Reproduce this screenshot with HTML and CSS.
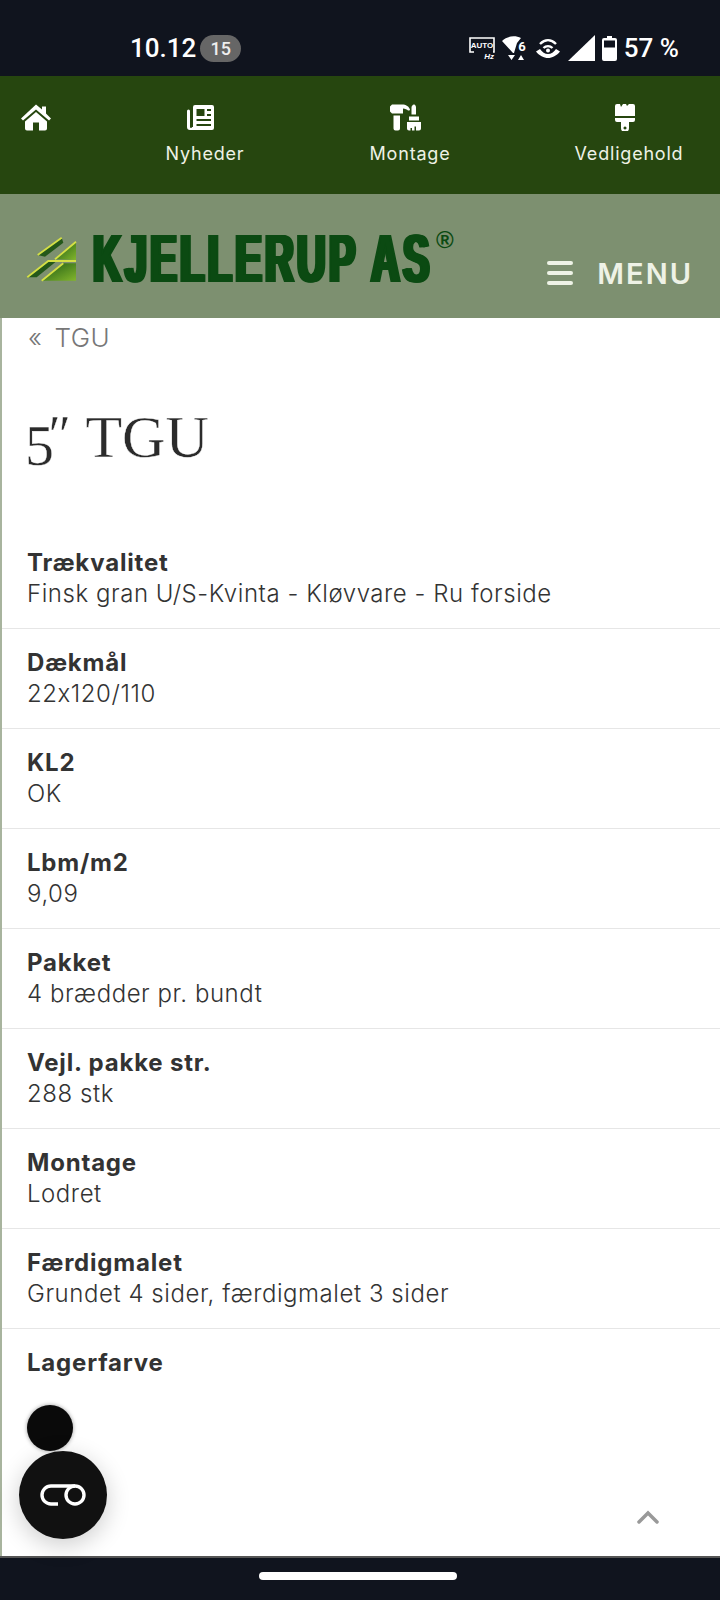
FILE: index.html
```html
<!DOCTYPE html>
<html lang="da">
<head>
  <meta charset="UTF-8" />
  <meta name="viewport" content="width=device-width, initial-scale=1.0" />
  <title>5" TGU</title>
  <link rel="stylesheet" href="styles.css">
</head>
<body>
  <div class="page">
    <!-- Phone status bar -->
    <div class="statusbar">
      <span class="time">10.12</span>
      <span class="badge">15</span>
      <div class="status-right">
        <svg class="st-auto" width="26" height="24" viewBox="0 0 26 24">
          <path d="M5 16H1V2h24v14h-1" fill="none" stroke="#fff" stroke-width="1.600"/>
          <text x="13" y="12" class="st-auto-text" text-anchor="middle">AUTO</text>
          <text x="25" y="23" class="st-hz-text" text-anchor="end">Hz</text>
        </svg>
        <svg class="st-wifi" width="26" height="26" viewBox="0 0 26 26">
          <path d="M0 6C5 1 13 0 19 3L15 8 12 18h-1z" fill="#fff"/>
          <path d="M6 20h7l-3.500 5zM16 25h6l-3-5z" fill="#fff"/>
          <text x="20" y="16" class="st-six" text-anchor="middle">6</text>
        </svg>
        <svg class="st-hotspot" width="26" height="24" viewBox="0 0 26 24">
          <path d="M5 8C10 3 16 3 21 8M8.500 12C11 9.500 15 9.500 17.500 12" fill="none" stroke="#fff" stroke-width="2.400"/>
          <circle cx="13" cy="14.500" r="2" fill="#fff"/>
          <path d="M1 15.500l4-2.500c2 3 5 5 8 5s6-2 8-5l4 2.500c-3 4-8 6.500-12 6.500S4 19.500 1 15.500z" fill="#fff"/>
        </svg>
        <svg class="st-signal" width="27" height="27" viewBox="0 0 27 27"><path d="M0 26L27 0v26z" fill="#fff"/></svg>
        <svg class="st-batt" width="15" height="25" viewBox="0 0 15 25">
          <path d="M5 0h5v2h3a2 2 0 0 1 2 2v19a2 2 0 0 1-2 2H2a2 2 0 0 1-2-2V4a2 2 0 0 1 2-2h3z" fill="#fff"/>
          <rect x="2" y="4.500" width="11" height="7" fill="#10141e"/>
        </svg>
        <span class="pct">57 %</span>
      </div>
    </div>

    <!-- Top links -->
    <nav class="topnav">
      <a class="nav-item nav-home">
        <svg width="30" height="26" viewBox="0 0 30 26"><path d="M15 0l6 5V2h4v7l5 5-2 2-13-11L2 16l-2-2zM4 17L15 7.500 26 17v7a2 2 0 0 1-2 2h-6v-8h-6v8H6a2 2 0 0 1-2-2z" fill="#fff"/></svg>
      </a>
      <a class="nav-item nav-news">
        <svg width="27" height="25" viewBox="0 0 27 25"><path d="M6 2a2 2 0 0 1 2-2h17a2 2 0 0 1 2 2v21a2 2 0 0 1-2 2H3a3 3 0 0 1-3-3V6a1.500 1.500 0 0 1 3 0v16a1 1 0 0 0 2 0h1zM9.500 4v7h8V4zM20 4v2h4V4zM20 9v2h4V9zM9.500 14v2H24v-2zM9.500 19v2H24v-2z" fill="#fff" fill-rule="evenodd"/></svg>
        <span>Nyheder</span>
      </a>
      <a class="nav-item nav-mont">
        <svg width="33" height="26" viewBox="0 0 33 26"><path d="M3 0h10c4 0 7 2 8 5 0 1-1 1-2 1-1-1-3-2-5-2v5H3L1 7V2zM4.500 11H11v13a2 2 0 0 1-2 2H6.500a2 2 0 0 1-2-2zM22.500 10V3c0-1 1-3 2.500-3s2 2 2 3v7zM20 12h10v4H20zM18 17.500h14V24a2 2 0 0 1-2 2h-3v-4h-1.500v4H23v-2.500h-1.500V26H20a2 2 0 0 1-2-2z" fill="#fff"/></svg>
        <span>Montage</span>
      </a>
      <a class="nav-item nav-vedl">
        <svg class="brush" width="20" height="27" viewBox="0 0 20 27"><path d="M2 0h3l1 3 2-3h3l1 2 2-2h4a2 2 0 0 1 2 2v10H0V2a2 2 0 0 1 2-2zM0 14h20v2a2 2 0 0 1-2 2h-4v6a4 4 0 0 1-8 0v-6H2a2 2 0 0 1-2-2zM10 22.500a1.500 1.500 0 1 0 .010 0z" fill="#fff" fill-rule="evenodd"/></svg>
        <span>Vedligehold</span>
      </a>
    </nav>

    <!-- Logo and menu -->
    <header class="brandbar">
      <svg class="logo-mark" width="52" height="58" viewBox="0 0 52 58">
        <defs>
          <linearGradient id="roof" x1="0" y1="0" x2="1" y2="1">
            <stop offset="0" stop-color="#1d5a14"/>
            <stop offset="1" stop-color="#82b52c"/>
          </linearGradient>
        </defs>
        <path d="M11.700 27L35.700 9.700l1.600 5L19 28.700z" fill="#24581a"/>
        <path d="M29 31.300L50 13.700V32z" fill="url(#roof)"/>
        <path d="M1.300 49.300L22.300 33h8.400L10.700 49.300z" fill="#24581a"/>
        <path d="M15.700 52.700L37.300 35.300H50v17.400z" fill="url(#roof)"/>
        <path d="M11.700 27L35.700 9.700M29 31.300L50 13.700M1.300 49.300L22.300 33H50M15.700 52.700L37.300 35.300" fill="none" stroke="#d5e045" stroke-width="1.800"/>
      </svg>
      <div class="logo-word"><span>KJELLERUP AS</span></div>
      <span class="logo-reg">®</span>
      <button class="menu-btn">
        <span class="burger"><i></i><i></i><i></i></span>
        <span class="menu-text">MENU</span>
      </button>
    </header>

    <main class="content">
      <div class="crumb"><span class="crumb-arrow">«</span><a>TGU</a></div>
      <h1><span class="five">5</span><span class="inch">″</span> TGU</h1>

      <div class="spec-list">
        <div class="spec"><strong>Trækvalitet</strong><span>Finsk gran U/S-Kvinta - Kløvvare - Ru forside</span></div>
        <div class="spec"><strong>Dækmål</strong><span>22x120/110</span></div>
        <div class="spec"><strong>KL2</strong><span>OK</span></div>
        <div class="spec"><strong>Lbm/m2</strong><span>9,09</span></div>
        <div class="spec"><strong>Pakket</strong><span>4 brædder pr. bundt</span></div>
        <div class="spec"><strong>Vejl. pakke str.</strong><span>288 stk</span></div>
        <div class="spec"><strong>Montage</strong><span>Lodret</span></div>
        <div class="spec"><strong>Færdigmalet</strong><span>Grundet 4 sider, færdigmalet 3 sider</span></div>
        <div class="spec last"><strong>Lagerfarve</strong></div>
      </div>

      <!-- Floating buttons -->
      <div class="fab-small"></div>
      <div class="fab">
        <svg width="46" height="22" viewBox="0 0 46 22"><path d="M18 20H11a9 9 0 0 1 0-18h24" fill="none" stroke="#fff" stroke-width="3.400"/><circle cx="35" cy="11" r="9" fill="none" stroke="#fff" stroke-width="3.400"/></svg>
      </div>
      <svg class="to-top" width="22" height="14" viewBox="0 0 22 14"><path d="M2 12l9-9 9 9" fill="none" stroke="#999" stroke-width="3.500" stroke-linecap="round"/></svg>
    </main>

    <div class="navbar"><div class="handle"></div></div>
  </div>
</body>
</html>
```

FILE: styles.css
```css
* {
  box-sizing: border-box;
}

body {
  margin: 0;
  background: #fff;
  font-family: Inter, "Open Sans", sans-serif;
  font-feature-settings: "calt" 0;
  color: #333;
}

.page {
  width: 720px;
  height: 1600px;
  display: flex;
  flex-direction: column;
  overflow: hidden;
}

/* status bar */
.statusbar {
  height: 76px;
  flex: none;
  background: #10141e;
  color: #fff;
  display: flex;
  align-items: center;
  padding: 20px 41px 0 130px;
  font-family: Roboto, sans-serif;
}

.time {
  font-size: 26px;
  font-weight: 500;
  line-height: 30px;
}

.badge {
  width: 41px;
  height: 27px;
  margin-left: 4px;
  border-radius: 14px;
  background: #666;
  font-size: 18px;
  font-weight: 500;
  line-height: 27px;
  text-align: center;
  color: #eee;
}

.status-right {
  margin-left: auto;
  display: flex;
  align-items: center;
  gap: 7px;
}

.st-auto-text {
  font: 700 8px "Liberation Sans", sans-serif;
  fill: #fff;
}

.st-hz-text {
  font: italic 700 8px "Liberation Sans", sans-serif;
  fill: #fff;
}

.st-six {
  font: 700 13px Roboto, sans-serif;
  fill: #fff;
}

.pct {
  font-size: 26px;
  font-weight: 500;
  line-height: 30px;
}

/* green links */
.topnav {
  height: 118px;
  flex: none;
  background: #26460f;
  display: flex;
  align-items: flex-start;
  gap: 105px;
  padding: 28px 0 0 21px;
}

.nav-item {
  display: flex;
  flex-direction: column;
  align-items: center;
  gap: 11px;
  color: #eef2e6;
  font-size: 18px;
  line-height: 24px;
  letter-spacing: 0.8px;
}

.nav-item svg {
  height: 27px;
}

.nav-home { width: 30px; }
.nav-news { width: 98px; }
.nav-mont { width: 102px; }
.nav-vedl { width: 130px; margin-left: -2px; }

.nav-news svg { margin-right: 10px; }
.nav-mont svg { margin-right: 10px; }
.nav-vedl svg { margin-right: 8px; }

/* logo bar */
.brandbar {
  height: 124px;
  flex: none;
  background: #7d9070;
  display: flex;
  align-items: flex-start;
  padding: 34px 0 0 26px;
}

.logo-word {
  width: 337px;
  margin: -4px 0 0 15px;
  height: 68px;
}

.logo-word span {
  display: inline-block;
  white-space: nowrap;
  font: 700 68px/68px "Liberation Sans", sans-serif;
  letter-spacing: 6px;
  color: #0b4a12;
  text-shadow: 4px 0 0 #0b4a12, -4px 0 0 #0b4a12, 2px 0 0 #0b4a12, -2px 0 0 #0b4a12;
  transform: scaleX(0.58);
  transform-origin: 0 0;
}

.logo-reg {
  margin: 0 0 0 6px;
  font: 700 24px/24px "Liberation Sans", sans-serif;
  color: #0b4a12;
}

.menu-btn {
  margin: 30px 27px 0 auto;
  padding: 0;
  height: 30px;
  border: 0;
  background: none;
  display: flex;
  align-items: center;
  gap: 24px;
  color: #eef2e6;
  font-family: Inter, sans-serif;
}

.burger {
  width: 26px;
  display: flex;
  flex-direction: column;
  gap: 6px;
}

.burger i {
  display: block;
  height: 4px;
  border-radius: 2px;
  background: #eef2e6;
}

.menu-text {
  font-size: 29px;
  font-weight: 600;
  letter-spacing: 2px;
}

/* page content */
.content {
  flex: 1;
  position: relative;
  padding-left: 1px;
  border-left: 2px solid #a8b49e;
}

.crumb {
  display: flex;
  gap: 12px;
  padding: 4px 0 0 25px;
  font-size: 26px;
  font-weight: 300;
  line-height: 32px;
  letter-spacing: 0.5px;
  color: #777;
}

h1 {
  margin: 47px 0 0 22px;
  height: 87px;
  font-family: "Liberation Serif", serif;
  font-size: 60px;
  font-weight: 400;
  line-height: 68px;
  color: #2b2b2b;
  -webkit-text-stroke: 0.4px #fff;
}

.five {
  font-size: 58px;
  letter-spacing: -9px;
  vertical-align: -8px;
}

.inch {
  font-style: italic;
  font-size: 54px;
  letter-spacing: 4px;
  vertical-align: 4px;
}

.spec-list {
  margin: 41px 0 0 -1px;
}

.spec {
  height: 100px;
  padding: 18px 25px 0 25px;
  border-bottom: 1px solid #e6e6e6;
  display: flex;
  flex-direction: column;
  font-size: 24px;
  line-height: 32px;
  font-weight: 300;
  letter-spacing: 0.55px;
  color: #333;
}

.spec span {
  margin-top: -1px;
}

.spec strong {
  font-weight: 700;
  letter-spacing: 0.8px;
}

.spec.last {
  border-bottom: 0;
}

.fab-small {
  position: absolute;
  left: 25px;
  top: 1087px;
  width: 46px;
  height: 46px;
  border-radius: 50%;
  background: #0a0a0a;
  box-shadow: 0 0 4px rgba(0,0,0,0.4);
}

.fab {
  position: absolute;
  left: 17px;
  top: 1133px;
  width: 88px;
  height: 88px;
  border-radius: 50%;
  background: #111;
  box-shadow: 0 6px 24px rgba(0,0,0,0.2);
  display: flex;
  align-items: center;
  justify-content: center;
}

.to-top {
  position: absolute;
  left: 635px;
  top: 1192px;
}

/* android nav bar */
.navbar {
  height: 44px;
  flex: none;
  background: #10141e;
  border-top: 2px solid #555;
  display: flex;
  justify-content: center;
  padding: 14px 4px 0 0;
}

.handle {
  width: 198px;
  height: 8px;
  border-radius: 4px;
  background: #fff;
}
```
